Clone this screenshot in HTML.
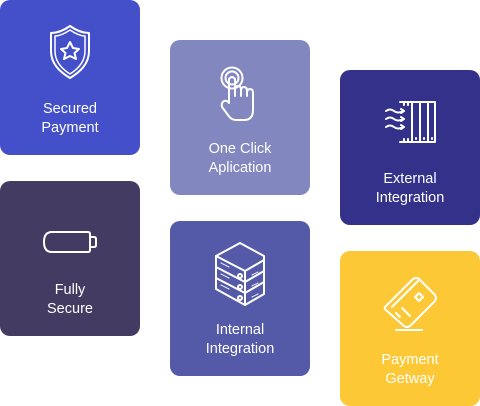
<!DOCTYPE html>
<html><head><style>
html,body{margin:0;padding:0;background:#fff;width:480px;height:406px;overflow:hidden}
.c{position:absolute;width:140px;height:155px;border-radius:10px;color:#fff;font-family:"Liberation Sans",sans-serif;font-size:14.5px;line-height:19px;text-align:center}
.t{position:absolute;left:0;right:0;top:100px}
svg{position:absolute;fill:none;stroke:#fff;stroke-width:2;stroke-linejoin:round;stroke-linecap:round}
</style></head><body>
<div class="c" style="left:0;top:0;background:#4350c9">
<svg style="left:48px;top:24px" width="44" height="56" viewBox="0 0 44 56">
<path d="M22 2 C15 7 8 9 3 9 L3 27 C3 40 12 48 22 54 C32 48 41 40 41 27 L41 9 C36 9 29 7 22 2Z"/>
<path d="M22 6 C16 10 11 12 7 12 L7 27 C7 38 14 45 22 50 C30 45 37 38 37 27 L37 12 C33 12 28 10 22 6Z" stroke-width="1.5"/>
<path d="M22 18 L25 24 L31 25 L26.5 29 L28 35 L22 32 L16 35 L17.5 29 L13 25 L19 24Z"/>
</svg>
<div class="t">Secured<br>Payment</div></div>

<div class="c" style="left:170px;top:40px;background:#8387bf">
<svg style="left:50px;top:26px" width="44" height="58" viewBox="0 0 44 58">
<circle cx="12" cy="12" r="10.5"/><circle cx="12" cy="12" r="6.5"/>
<path d="M9 36 L9 13 Q12 9 15 13 L15 30 M15 24 Q15 20 18 20 Q21 20 21 24 L21 30 M21 25 Q21 21 24 21 Q27 21 27 25 L27 30 M27 27 Q27 23 30 23 Q33 23 33 27 L33 44 Q33 54 24 54 L16 54 Q11 54 8 49 L2 41 Q1 37 4 35 Q7 34 9 37"/>
</svg>
<div class="t">One Click<br>Aplication</div></div>

<div class="c" style="left:340px;top:70px;background:#33318a">
<svg style="left:44px;top:30px" width="52" height="44" viewBox="0 0 52 44">
<path d="M16 2 L51 2 L51 42 L16 42"/><path d="M28 2 L28 42 M36 2 L36 42 M44 2 L44 42" />
<path d="M20 2v3M24 2v3M20 42v-3M24 42v-3M32 38v1M40 38v1M48 38v1"/>
<path d="M2 11 Q6 8 10 11 Q14 14 20 11 M17 9 L20 11 L17 13 M2 19 Q6 16 10 19 Q14 22 20 19 M17 17 L20 19 L17 21 M2 27 Q6 24 10 27 Q14 30 20 27 M17 25 L20 27 L17 29"/>
</svg>
<div class="t">External<br>Integration</div></div>

<div class="c" style="left:0;top:181px;background:#433b61">
<svg style="left:42px;top:48px" width="56" height="26" viewBox="0 0 56 26">
<path d="M10 3 L46 3 Q48 3 48 5 L48 21 Q48 23 46 23 L10 23 Q2 23 2 13 Q2 3 10 3Z"/>
<path d="M48 8 L52 8 Q54 8 54 10 L54 16 Q54 18 52 18 L48 18"/>
</svg>
<div class="t">Fully<br>Secure</div></div>

<div class="c" style="left:170px;top:221px;background:#5459a8">
<svg style="left:44px;top:20px" width="52" height="66" viewBox="0 0 52 66">
<path d="M2 15 L26 2 L50 15 L50 53 L31 64 L2 48Z"/><path d="M2 15 L31 30 L50 19 M2 26 L31 41 L50 30 M2 37 L31 52 L50 41 M31 30 L31 64"/>
<circle cx="26" cy="35" r="2"/><circle cx="26" cy="46" r="2"/><circle cx="26" cy="57" r="2"/>
<path d="M7 22l8 4M7 33l8 4M7 44l8 4M38 34l6-3M38 45l6-3M38 56l6-3" stroke-width="1" stroke-dasharray="1 1"/>
</svg>
<div class="t">Internal<br>Integration</div></div>

<div class="c" style="left:340px;top:251px;background:#fdc835">
<svg style="left:42px;top:24px" width="58" height="58" viewBox="0 0 58 58">
<path d="M3 32 L31 4 Q34 2 37 4 L53 20 Q55 23 53 26 L28 51 Q25 53 22 51 L5 36 Q2 34 3 32Z"/>
<path d="M10 26 L36 0" transform="translate(0,6)"/>
<path d="M14 38 L18 42 M20 33 L28 41 M37 18 L41 22 L37 26 L33 22Z"/>
<path d="M14 55 L40 55"/>
</svg>
<div class="t">Payment<br>Getway</div></div>
</body></html>
